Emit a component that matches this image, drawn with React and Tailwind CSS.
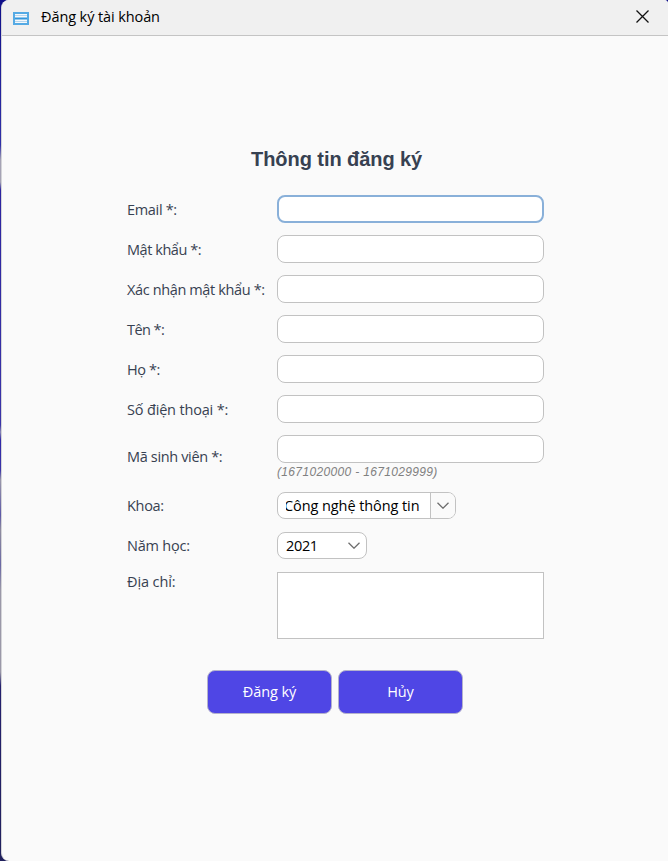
import React from "react";

const fields = [
  { label: "Email *:", ls: "tracking-[-0.33px]", focused: true },
  { label: "Mật khẩu *:", ls: "tracking-[-0.45px]" },
  { label: "Xác nhận mật khẩu *:", ls: "tracking-[-0.37px]" },
  { label: "Tên *:", ls: "tracking-[-0.55px]" },
  { label: "Họ *:", ls: "tracking-[-0.4px]" },
  { label: "Số điện thoại *:", ls: "tracking-[-0.17px]" },
];

function Label({ children, className = "tracking-[-0.35px]" }) {
  return (
    <label className={`w-[150px] shrink-0 whitespace-nowrap text-[14.5px] leading-5 text-[#374151] ${className}`}>
      {children}
    </label>
  );
}

function Input({ focused }) {
  return (
    <input
      className={`block h-7 w-[267px] rounded-[8px] bg-white px-2 outline-none ${
        focused ? "border-2 border-[#89b0d9]" : "border border-[#c2c2c2]"
      }`}
    />
  );
}

function Chevron() {
  return (
    <svg width="12" height="7" viewBox="0 0 12 7" fill="none" stroke="#6e6e6e" strokeWidth="1.3">
      <path d="M0.5 0.7 6 6.2 11.5 0.7" />
    </svg>
  );
}

function ActionButton({ children }) {
  return (
    <button className="h-11 w-[125px] rounded-[8px] border border-[#b4b2cc] bg-[#4f46e5] pb-px text-[14.5px] tracking-[-0.1px] text-white">
      {children}
    </button>
  );
}

export default function App() {
  return (
    <div className="h-[861px] w-[668px] overflow-hidden bg-[linear-gradient(to_bottom,#10108a_0px,#3030a8_145px,#a5a3b5_160px,#a5a3b5_182px,#2c24a0_190px,#3a34a8_425px,#8a88b5_432px,#3028a8_440px,#3a34a8_470px,#9a98aa_480px,#5c58a8_515px,#8f8d9f_530px,#6a68a5_565px,#9a98a8_590px,#9a98a8_672px,#24206e_686px,#20205c_861px)] pl-px font-['Open_Sans','Noto_Sans',sans-serif]">
      <div className="flex h-full flex-col overflow-hidden rounded-l-[8px] rounded-tr-[4px] border-l border-[#d4d4d8] bg-[#fafafa]">
        <header className="flex h-9 shrink-0 items-center border-b border-[#c4c4c4] bg-[#f0f0f0] pl-[11px] pr-[19px]">
          <svg className="mt-px" width="16" height="13" viewBox="0 0 16 13">
            <rect x="1" y="1" width="14" height="11" fill="#f5f8fb" stroke="#55aae4" strokeWidth="2" />
            <path d="M2 3.5H14M2 9.5H14" stroke="#b5d6ee" />
            <path d="M2 6.5H14" stroke="#3296dc" strokeWidth="2" />
          </svg>
          <span className="ml-3 pb-px text-[14.5px] tracking-[-0.1px] text-black">Đăng ký tài khoản</span>
          <svg className="-mt-[3px] ml-auto" width="13" height="13" viewBox="0 0 13 13" stroke="#111" strokeWidth="1.3">
            <path d="M0.5 0.5 12.5 12.5M12.5 0.5 0.5 12.5" />
          </svg>
        </header>

        <main className="flex flex-col pl-[125px] pt-[111px]">
          <h1 className="ml-[124px] h-6 whitespace-nowrap font-['Liberation_Sans',sans-serif] text-[20px] font-bold leading-6 tracking-[-0.06px] text-[#374151]">
            Thông tin đăng ký
          </h1>
          <form className="mt-6 flex flex-col">
            <div className="flex flex-col gap-3">
              {fields.map((f) => (
                <div key={f.label} className="flex h-7 items-center">
                  <Label className={`pt-0.5 ${f.ls}`}>{f.label}</Label>
                  <Input focused={f.focused} />
                </div>
              ))}
              <div className="flex h-[45px] items-center">
                <Label className="pb-0.5 tracking-[-0.35px]">Mã sinh viên *:</Label>
                <div className="h-full">
                  <Input />
                  <p className="mt-px whitespace-nowrap font-['Liberation_Sans',sans-serif] text-[12px] italic leading-4 tracking-[0.34px] text-[#808080]">
                    (1671020000 - 1671029999)
                  </p>
                </div>
              </div>
              <div className="flex h-[27px] items-center">
                <Label className="tracking-[-0.3px]">Khoa:</Label>
                <div className="flex h-[27px] w-[179px] overflow-hidden rounded-[8px] border border-[#c2c2c2] bg-white text-black">
                  <div className="ml-2 flex w-[145px] items-center overflow-hidden border-r border-[#c2c2c2]">
                    <span className="-ml-[2px] whitespace-nowrap text-[14.5px] tracking-[-0.08px]">Công nghệ thông tin</span>
                  </div>
                  <div className="flex flex-1 items-center justify-center bg-[#fafafa]">
                    <Chevron />
                  </div>
                </div>
              </div>
              <div className="mt-px flex h-[27px] items-center">
                <Label className="tracking-[-0.22px]">Năm học:</Label>
                <div className="flex h-[27px] w-[90px] items-center justify-between rounded-[8px] border border-[#c2c2c2] bg-white pl-2 pr-[6px] text-[14.5px] tracking-[-0.35px] text-black">
                  2021
                  <Chevron />
                </div>
              </div>
              <div className="mt-px flex h-[67px] items-start">
                <Label className="tracking-[-0.1px]">Địa chỉ:</Label>
                <textarea className="h-[67px] w-[267px] resize-none border border-[#c2c2c2] bg-white outline-none" />
              </div>
            </div>
            <div className="ml-20 mt-[31px] flex gap-[6px]">
              <ActionButton>Đăng ký</ActionButton>
              <ActionButton>Hủy</ActionButton>
            </div>
          </form>
        </main>
      </div>
    </div>
  );
}
